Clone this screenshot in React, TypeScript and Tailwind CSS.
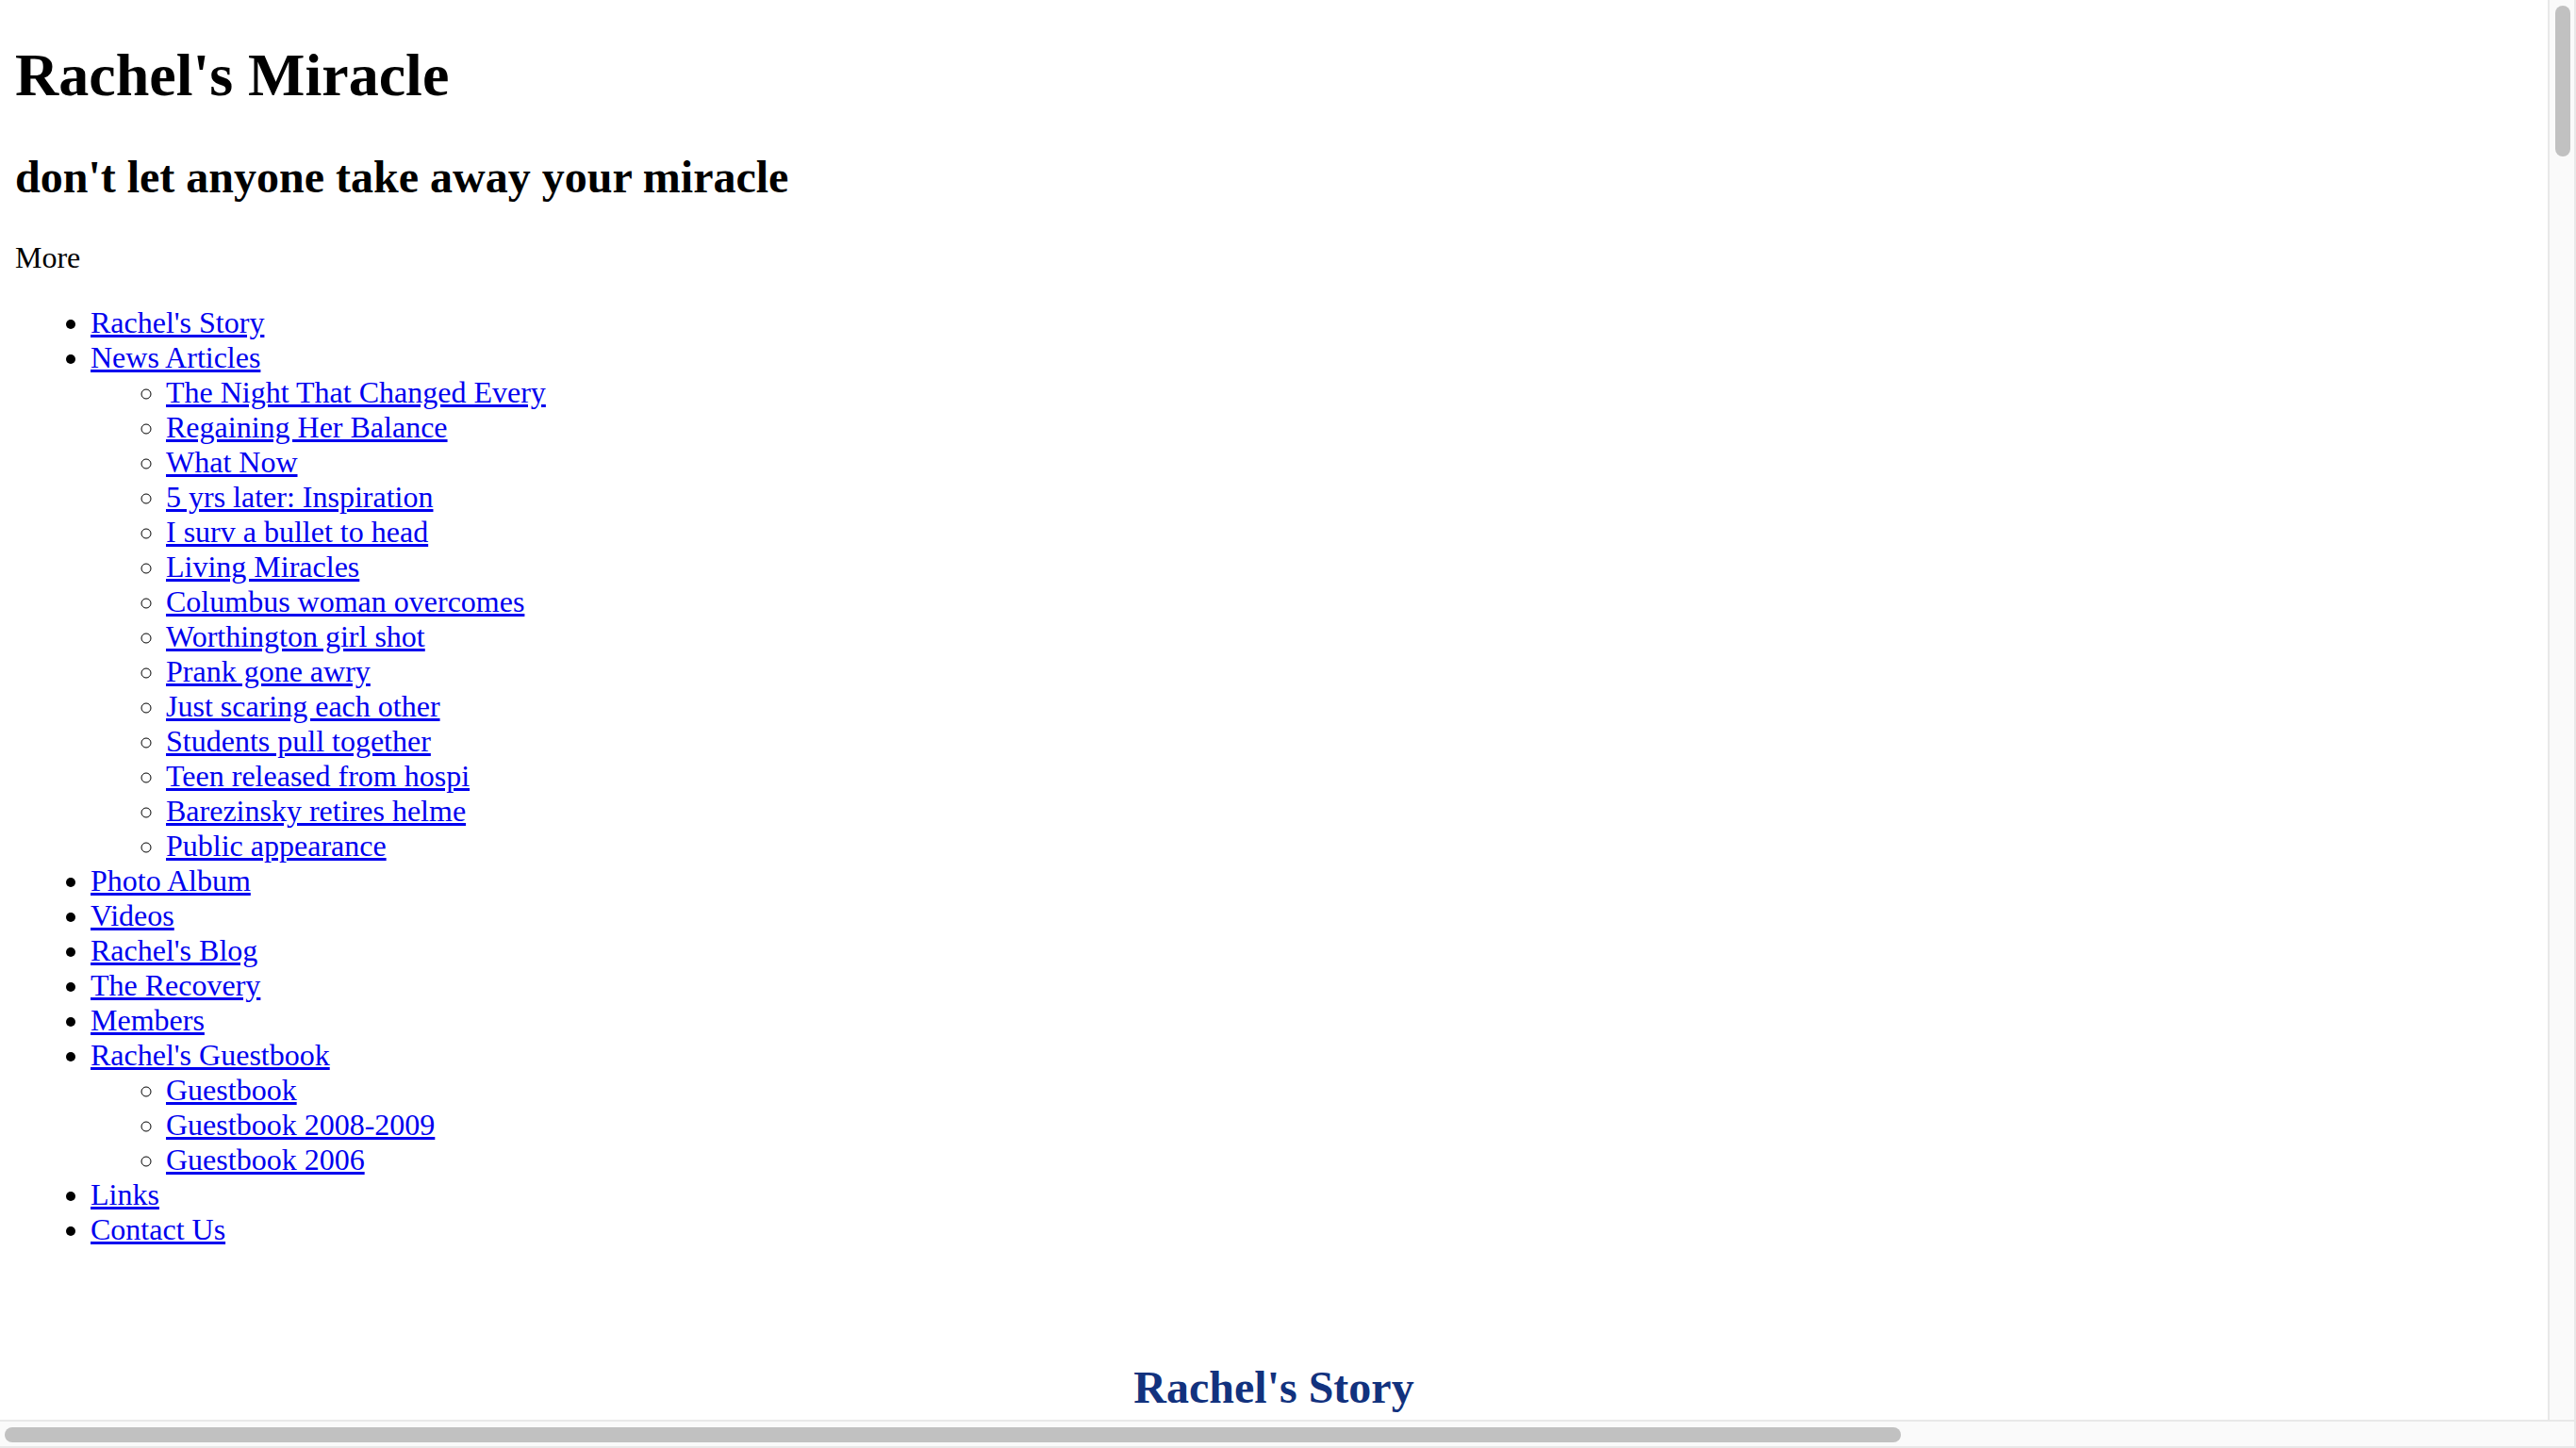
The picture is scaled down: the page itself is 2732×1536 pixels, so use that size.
import React from 'react';

type NavItem = { label: string; children?: string[] };

const nav: NavItem[] = [
  { label: "Rachel's Story" },
  {
    label: 'News Articles',
    children: [
      'The Night That Changed Every',
      'Regaining Her Balance',
      'What Now',
      '5 yrs later: Inspiration',
      'I surv a bullet to head',
      'Living Miracles',
      'Columbus woman overcomes',
      'Worthington girl shot',
      'Prank gone awry',
      'Just scaring each other',
      'Students pull together',
      'Teen released from hospi',
      'Barezinsky retires helme',
      'Public appearance',
    ],
  },
  { label: 'Photo Album' },
  { label: 'Videos' },
  { label: "Rachel's Blog" },
  { label: 'The Recovery' },
  { label: 'Members' },
  {
    label: "Rachel's Guestbook",
    children: ['Guestbook', 'Guestbook 2008-2009', 'Guestbook 2006'],
  },
  { label: 'Links' },
  { label: 'Contact Us' },
];

const Link = ({ children }: { children: React.ReactNode }) => (
  <a href="#" className="text-[#0000ee] underline">
    {children}
  </a>
);

export default function App() {
  return (
    <div className="h-screen w-screen flex flex-col overflow-hidden bg-white text-black font-['Liberation_Serif','Times_New_Roman',serif] leading-[normal]">
      <div className="flex flex-1 min-h-0">
        {/* page */}
        <div className="flex-1 min-w-0 overflow-hidden px-4 text-[32px]">
          <h1 className="text-[64px] font-bold mt-[43px] mb-[43px]">Rachel's Miracle</h1>
          <h2 className="text-[48px] font-bold my-[40px]">don't let anyone take away your miracle</h2>
          <p className="my-[32px]">More</p>
          <ul className="list-disc pl-20 my-[32px]">
            {nav.map((item) => (
              <li key={item.label}>
                <Link>{item.label}</Link>
                {item.children && (
                  <ul className="list-[circle] pl-20">
                    {item.children.map((c) => (
                      <li key={c}>
                        <Link>{c}</Link>
                      </li>
                    ))}
                  </ul>
                )}
              </li>
            ))}
          </ul>
          <h2 className="text-[48px] font-bold text-center text-[#12327e] mt-[121px]">Rachel's Story</h2>
        </div>
        {/* vertical scrollbar */}
        <div className="w-[30px] shrink-0 bg-[#fafafa] border-l-2 border-r-2 border-[#e8e8e8] pt-[6px] pl-[6px]">
          <div className="w-4 h-[160px] rounded-full bg-[#c1c1c1]" />
        </div>
      </div>
      {/* horizontal scrollbar */}
      <div className="h-[30px] shrink-0 bg-[#fafafa] border-t-2 border-b-2 border-r-2 border-[#e8e8e8] pt-[6px] pl-[5px]">
        <div className="h-4 w-[2011px] rounded-full bg-[#c1c1c1]" />
      </div>
    </div>
  );
}
